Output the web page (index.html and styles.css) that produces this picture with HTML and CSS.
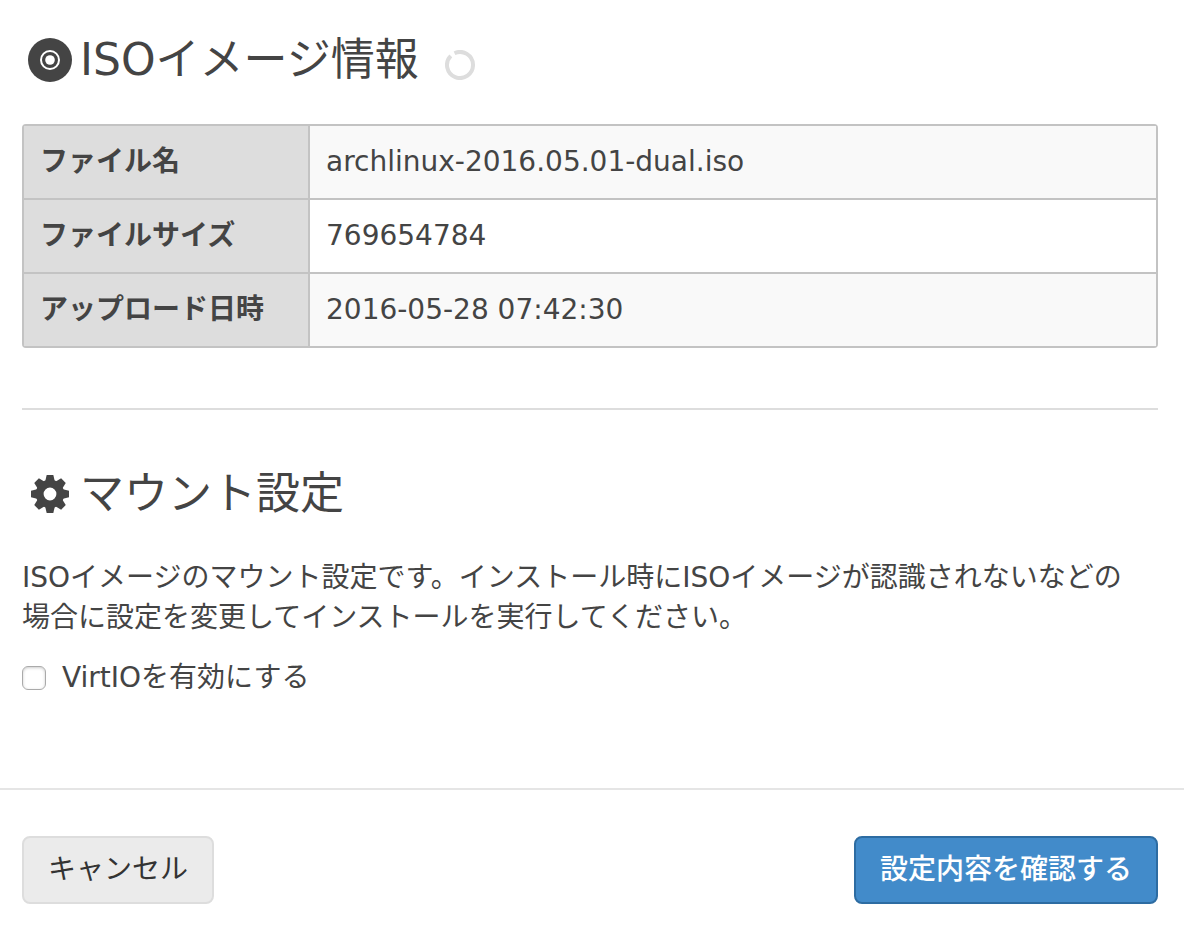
FILE: index.html
```html
<!DOCTYPE html>
<html lang="ja">
<head>
<meta charset="utf-8">
<title>ISOイメージ情報</title>
<link rel="stylesheet" href="styles.css">
</head>
<body>
<form class="dialog">
  <main class="content">
    <section class="section">
      <h1 class="heading">
        <svg class="icon" viewBox="0 0 44 44" aria-hidden="true"><circle cx="22" cy="22" r="22" fill="#444"/><circle cx="22" cy="22" r="9" fill="none" stroke="#fff" stroke-width="2"/><circle cx="22" cy="22" r="4.800" fill="#fff"/></svg>
        <span>ISOイメージ情報</span>
        <svg class="spinner" viewBox="0 0 30 30" aria-hidden="true"><path d="M9.500 3.200A13 13 0 1 1 5.800 5.800" fill="none" stroke="#ddd" stroke-width="4"/></svg>
      </h1>
      <table class="info">
        <tbody>
          <tr><th scope="row">ファイル名</th><td>archlinux-2016.05.01-dual.iso</td></tr>
          <tr><th scope="row">ファイルサイズ</th><td>769654784</td></tr>
          <tr><th scope="row">アップロード日時</th><td>2016-05-28 07:42:30</td></tr>
        </tbody>
      </table>
    </section>
    <section class="section section-mount">
      <h2 class="heading">
        <svg class="icon" viewBox="0 0 44 44" aria-hidden="true"><g fill="#444"><path id="tooth" d="M18.700 3h6.600l1.700 7h-10z"/><use href="#tooth" transform="rotate(45 22 22)"/><use href="#tooth" transform="rotate(90 22 22)"/><use href="#tooth" transform="rotate(135 22 22)"/><use href="#tooth" transform="rotate(180 22 22)"/><use href="#tooth" transform="rotate(225 22 22)"/><use href="#tooth" transform="rotate(270 22 22)"/><use href="#tooth" transform="rotate(315 22 22)"/></g><circle cx="22" cy="22" r="10.300" fill="none" stroke="#444" stroke-width="7.800"/></svg>
        <span>マウント設定</span>
      </h2>
      <p class="description">ISOイメージのマウント設定です。インストール時にISOイメージが認識されないなどの場合に設定を変更してインストールを実行してください。</p>
      <label class="option"><input class="check" type="checkbox"><span>VirtIOを有効にする</span></label>
    </section>
  </main>
  <footer class="actions">
    <button class="button" type="button">キャンセル</button>
    <button class="button button-primary" type="submit">設定内容を確認する</button>
  </footer>
</form>
</body>
</html>
```
FILE: styles.css
```css
* { box-sizing: border-box; }
body {
  margin: 0;
  background: #fff;
  color: #444;
  font: 28px/40px "DejaVu Sans", "Noto Sans CJK JP", sans-serif;
}
.content { padding: 30px 26px 90px 22px; }
.heading {
  display: flex;
  align-items: center;
  margin: 0;
  padding-left: 6px;
  font-size: 44px;
  font-weight: 400;
  line-height: 60px;
}
.icon { width: 44px; height: 44px; margin-right: 8px; }
.spinner { width: 30px; height: 30px; margin: 10px 0 0 26px; }
.info {
  width: 100%;
  margin-top: 34px;
  border: 2px solid #c3c3c3;
  border-radius: 4px;
  border-spacing: 0;
  text-align: left;
}
.info th, .info td { height: 74px; padding: 0 16px; }
.info tr:first-child > * { height: 72px; }
.info tr + tr > * { border-top: 2px solid #c3c3c3; }
.info th { width: 284px; background: #ddd; }
.info td { border-left: 2px solid #c3c3c3; }
.info tr:nth-child(odd) td { background: #f9f9f9; }
.section-mount { margin-top: 60px; padding-top: 54px; border-top: 2px solid #ddd; }
.description { margin: 34px 0 20px; padding-right: 20px; }
.option { display: flex; align-items: center; gap: 16px; }
.check {
  appearance: none;
  width: 24px;
  height: 24px;
  margin: 0;
  border: 1px solid #aaa;
  border-radius: 6px;
  background: #fff;
  box-shadow: inset 0 1px 3px #ccc;
}
.check:checked { background: #428bca; }
.actions {
  display: flex;
  justify-content: space-between;
  padding: 46px 26px 26px 22px;
  border-top: 2px solid #e5e5e5;
}
.button {
  height: 68px;
  padding: 0 24px;
  border: 2px solid #ddd;
  border-radius: 8px;
  background: #ebebeb;
  color: #333;
  font: inherit;
}
.button-primary { border-color: #2d6ca2; background: #428bca; color: #fff; font-weight: 500; }
```
